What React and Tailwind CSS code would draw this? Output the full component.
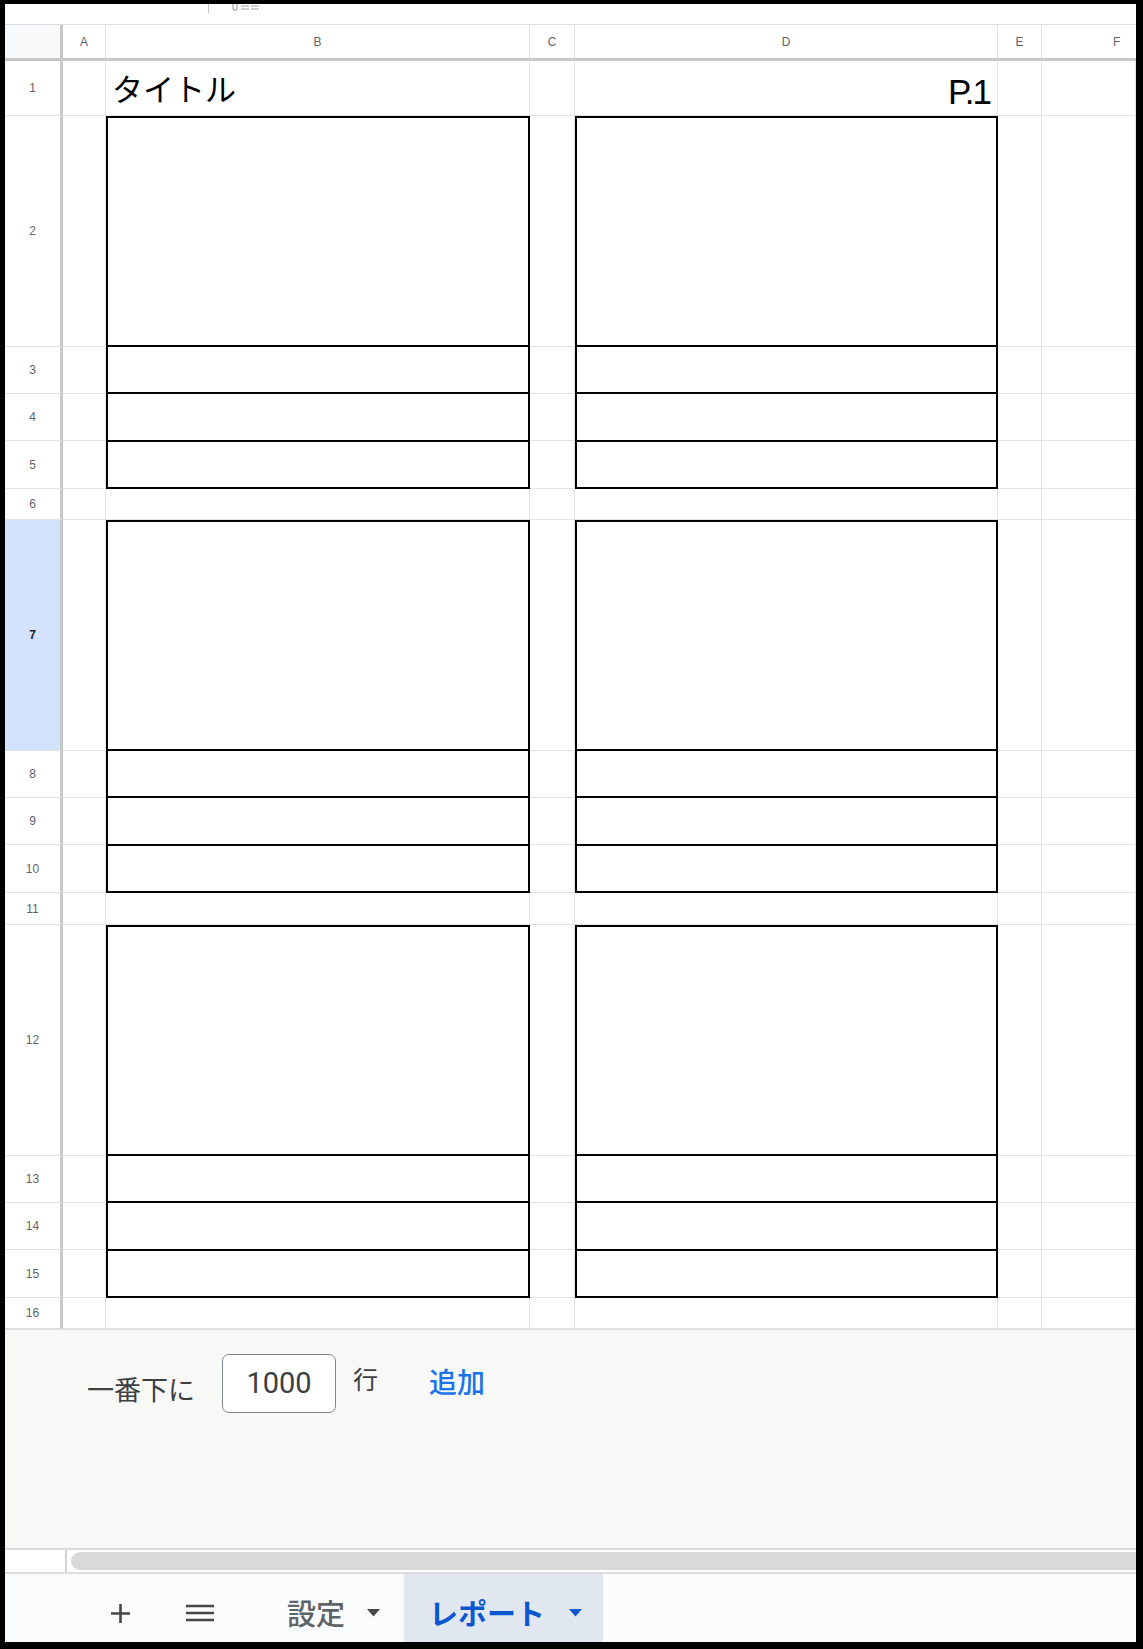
import React from 'react';

const COLS = ['A', 'B', 'C', 'D', 'E'];

const jp = { fontFamily: '"Noto Sans CJK JP", "Liberation Sans", sans-serif' };
const latin = { fontFamily: '"Liberation Sans", Arial, sans-serif' };

const Box = () => (
  <div className="row-span-4 flex flex-col border-2 border-black bg-white">
    <div className="h-[229px] border-b-2 border-black" />
    <div className="flex-1 border-b-2 border-black" />
    <div className="flex-1 border-b-2 border-black" />
    <div className="flex-1" />
  </div>
);

const Cell = ({ className = '' }) => (
  <div className={`border-r border-b border-[#e3e3e3] bg-white ${className}`} />
);

const RowHead = ({ n, active }) => (
  <div
    className={`flex items-center justify-center border-r-[3px] border-b border-r-[#c7c7c7] border-b-[#e0e0e0] text-[12px] ${
      active ? 'bg-[#d3e3fd] font-bold text-[#1f1f1f]' : 'bg-white text-[#5f6368]'
    }`}
    style={latin}
  >
    {n}
  </div>
);

const Block = ({ start }) => (
  <>
    {/* first (tall) row of the block */}
    <RowHead n={start} active={start === 7} />
    <Cell />
    <Box />
    <Cell />
    <Box />
    <Cell />
    <Cell />
    {[start + 1, start + 2, start + 3].map((n) => (
      <React.Fragment key={n}>
        <RowHead n={n} />
        <Cell />
        <Cell />
        <Cell />
        <Cell />
      </React.Fragment>
    ))}
    {/* spacer row */}
    <RowHead n={start + 4} />
    <Cell />
    <Cell />
    <Cell />
    <Cell />
    <Cell />
    <Cell />
  </>
);

const Caret = ({ color }) => (
  <svg width="13" height="8" viewBox="0 0 13 8">
    <path d="M0 0 L13 0 L6.5 7.5 Z" fill={color} />
  </svg>
);

export default function App() {
  return (
    <div className="w-[1143px] h-[1649px] bg-white">
      <div className="flex h-full w-full flex-col border-t-4 border-l-[5px] border-r-[7px] border-b-[7px] border-black">
        {/* cut-off toolbar strip */}
        <div className="relative h-[21px] shrink-0 border-b border-[#dadce0] bg-white">
          <div className="absolute left-[203px] top-0 h-[9px] w-px bg-[#c4c4c4]" />
          <svg className="absolute left-[227px] top-0" width="28" height="8" viewBox="0 0 28 8">
            <path d="M1 0 v4 a2 2 0 0 0 4 0 v-4" stroke="#b0b0b0" strokeWidth="1.4" fill="none" />
            <path d="M9 2 h8 M9 5 h8 M19 2 h8 M19 5 h8" stroke="#c0c0c0" strokeWidth="1.4" />
          </svg>
        </div>

        {/* sheet grid */}
        <div
          className="grid shrink-0 grid-cols-[58px_43px_424px_45px_423px_44px_94px] grid-rows-[36px_55px_231px_47px_47px_48px_31px_231px_47px_47px_48px_32px_231px_47px_47px_48px_31px]"
        >
          {/* column headers */}
          <div className="border-r-[3px] border-b-[3px] border-[#c7c7c7] bg-[#f8f9fa]" />
          {COLS.map((c) => (
            <div
              key={c}
              className="flex items-center justify-center border-r border-b-[3px] border-r-[#e0e0e0] border-b-[#c7c7c7] bg-white text-[12px] text-[#5f6368]"
              style={latin}
            >
              {c}
            </div>
          ))}
          <div
            className="flex items-center border-b-[3px] border-b-[#c7c7c7] bg-white pl-[71px] text-[12px] text-[#5f6368]"
            style={latin}
          >
            F
          </div>

          {/* row 1 */}
          <RowHead n={1} />
          <Cell />
          <div className="flex items-end border-r border-b border-[#e3e3e3] bg-white pb-[12px] pl-[6px]">
            <span className="text-[31px] leading-none text-black" style={jp}>タイトル</span>
          </div>
          <Cell />
          <div className="flex items-end justify-end border-r border-b border-[#e3e3e3] bg-white pb-[6px] pr-[7px]">
            <span className="text-[35px] leading-none tracking-[-2px] text-black" style={latin}>P.1</span>
          </div>
          <Cell />
          <Cell />

          <Block start={2} />
          <Block start={7} />
          <Block start={12} />
        </div>

        {/* add rows bar */}
        <div className="flex h-[219px] shrink-0 items-start border-t border-[#e0e0e0] bg-[#f8f9f7] pl-[82px] pt-[24px]" style={jp}>
          <span className="mt-[21px] text-[27px] leading-none text-[#3c4043]">一番下に</span>
          <div className="ml-[27px] flex h-[59px] w-[114px] items-center justify-center rounded-[7px] border-[1.5px] border-[#80868b] bg-white">
            <span className="text-[29px] text-[#3c4043]" style={{ fontFamily: 'Roboto, "Liberation Sans", sans-serif' }}>1000</span>
          </div>
          <span className="ml-[17px] mt-[12px] text-[25px] leading-none text-[#3c4043]">行</span>
          <span className="ml-[51px] mt-[13px] text-[28px] font-medium leading-none text-[#1a73e8]">追加</span>
        </div>

        {/* horizontal scrollbar */}
        <div className="flex h-[26px] shrink-0 border-t-2 border-b-2 border-[#dcdcdc] bg-white">
          <div className="w-[62px] border-r-2 border-[#d4d4d4]" />
          <div className="flex-1 py-[2px] pl-[4px]">
            <div className="h-full rounded-l-full bg-[#d9d9d9]" />
          </div>
        </div>

        {/* sheet tabs */}
        <div className="flex flex-1 items-stretch bg-[#f9fbfd]" style={jp}>
          <div className="flex w-[126px] items-center justify-end pt-[10px]">
            <svg width="21" height="21" viewBox="0 0 21 21">
              <path d="M10.5 1 V20 M1 10.5 H20" stroke="#444746" strokeWidth="2.6" />
            </svg>
          </div>
          <div className="ml-[55px] flex items-center pt-[10px]">
            <svg width="28" height="18" viewBox="0 0 28 18">
              <path d="M0 2 H28 M0 9 H28 M0 16 H28" stroke="#444746" strokeWidth="2.6" />
            </svg>
          </div>
          <div className="ml-[73px] flex items-center gap-[22px] pt-[10px]">
            <span className="text-[29px] font-medium text-[#5f6368]">設定</span>
            <Caret color="#444746" />
          </div>
          <div className="ml-[24px] flex w-[199px] items-center gap-[24px] bg-[#e1e7f0] pl-[25px] pt-[10px]">
            <span className="text-[29px] font-bold text-[#0b57d0]">レポート</span>
            <Caret color="#0b57d0" />
          </div>
        </div>
      </div>
    </div>
  );
}
